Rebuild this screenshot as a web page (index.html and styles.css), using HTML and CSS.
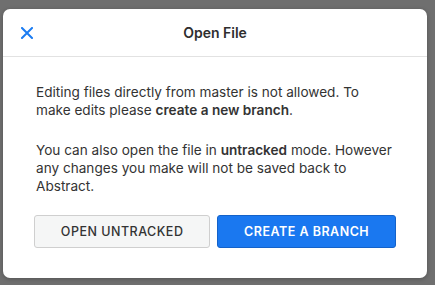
FILE: index.html
```html
<!DOCTYPE html>
<html lang="en">
<head>
<meta charset="UTF-8">
<meta name="viewport" content="width=device-width, initial-scale=1.0">
<title>Open File</title>
<link rel="stylesheet" href="styles.css">
</head>
<body>
  <div class="modal">
    <div class="modal-header">
      <button class="close-btn" aria-label="Close">
        <svg width="12" height="12" viewBox="0 0 12 12">
          <path d="M1 1 L11 11 M11 1 L1 11" stroke="#1b7cf2" stroke-width="2" stroke-linecap="square"/>
        </svg>
      </button>
      <h2>Open File</h2>
    </div>
    <div class="modal-body">
      <p>Editing files directly from master is not allowed. To make edits please <b>create a new branch</b>.</p>
      <p class="last">You can also open the file in <b>untracked</b> mode. However any changes you make will not be saved back to Abstract.</p>
      <div class="actions">
        <button class="btn btn-secondary">Open Untracked</button>
        <button class="btn btn-primary">Create a Branch</button>
      </div>
    </div>
  </div>
</body>
</html>
```

FILE: styles.css
```css
body {
  font-family: Inter, "Noto Sans", sans-serif;
  background: #6f6f6f;
  margin: 0;
  padding: 9px 8px 0 3px;
  height: 285px;
  box-sizing: border-box;
  overflow: hidden;
}
.modal {
  background-color: white;
  width: 424px;
  height: 269px;
  border-radius: 7px;
  box-shadow: 0 1px 4px rgba(0, 0, 0, 0.25);
  box-sizing: border-box;
  color: #333;
}
.modal-header {
  position: relative;
  height: 47px;
  border-bottom: 1px solid #e2e2e2;
  display: flex;
  align-items: center;
  justify-content: center;
}
.modal-header h2 {
  margin: 0;
  font-size: 14px;
  font-weight: 600;
  color: #2e2e2e;
}
.close-btn {
  position: absolute;
  left: 18px;
  top: 18px;
  padding: 0;
  border: none;
  background: none;
  width: 12px;
  height: 12px;
  cursor: pointer;
}
.close-btn svg {
  display: block;
}
.modal-body {
  padding: 26px 30px 0 32px;
}
.modal-body p {
  margin: 0 0 22px 0;
  font-size: 13.6px;
  line-height: 18px;
  margin-left: 1px;
}
.modal-body p.last {
  margin-bottom: 20px;
}
.modal-body b {
  font-weight: 600;
}
.actions {
  display: flex;
  gap: 7px;
  margin-left: -1px;
  margin-right: 1px;
}
.btn {
  flex: 1 1 auto;
  height: 33px;
  border-radius: 3px;
  font-family: inherit;
  font-size: 12.5px;
  letter-spacing: 0.5px;
  text-transform: uppercase;
  cursor: pointer;
}
.btn-secondary {
  background-color: #f5f6f6;
  border: 1px solid #cfcfcf;
  color: #333;
  font-weight: 500;
}
.btn-primary {
  background-color: #1a78f0;
  border: 1px solid #1462c9;
  color: white;
  font-weight: 600;
}
```
